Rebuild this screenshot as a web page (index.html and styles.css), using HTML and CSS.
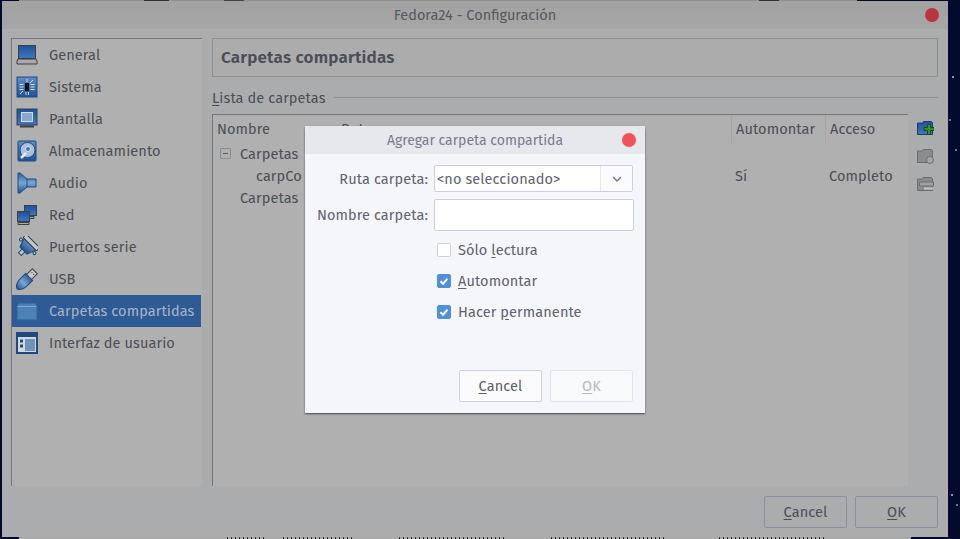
FILE: index.html
```html
<!DOCTYPE html>
<html lang="es">
  <head>
    <meta charset="UTF-8" />
    <title>Fedora24 - Configuración</title>
    <link rel="stylesheet" href="styles.css">
  </head>
  <body>
    <svg class="defs" width="0" height="0">
      <linearGradient id="blue" x1="0" y1="0" x2="0" y2="1">
        <stop offset="0" stop-color="#5e8fc6"/>
        <stop offset="1" stop-color="#1f5096"/>
      </linearGradient>
      <linearGradient id="horn" x1="0" y1="0" x2="0" y2="1">
        <stop offset="0" stop-color="#2a62a6"/>
        <stop offset=".5" stop-color="#7aa6d2"/>
        <stop offset="1" stop-color="#1f5096"/>
      </linearGradient>
      <linearGradient id="screen" x1="0" y1="0" x2="0" y2="1">
        <stop offset="0" stop-color="#1e519c"/>
        <stop offset="1" stop-color="#3f78c0"/>
      </linearGradient>
    </svg>
    <div class="behind behind-top"></div>
    <div class="behind behind-bottom"></div>

    <div class="window">
      <div class="titlebar">
        <span class="title">Fedora24 - Configuración</span>
        <span class="close"></span>
      </div>
      <div class="content">
        <div class="main">
          <ul class="sidebar">
            <li>
              <svg viewBox="0 0 22 22"><rect x="2.5" y="1.5" width="17" height="13" fill="url(#screen)" stroke="#3c3f44"/><path d="M2 15h18l1 2v3H1v-3z" fill="#a8a9aa" stroke="#3c3f44"/></svg>
              General
            </li>
            <li>
              <svg viewBox="0 0 22 22"><rect x="1" y="1" width="20" height="20" fill="url(#blue)" stroke="#1e4a80"/><rect x="9" y="7" width="4" height="8" fill="#111"/><path d="M3.5 8.5h4M3.5 11h4M3.5 13.5h4M14.5 8.5h4M14.5 11h4M14.5 13.5h4M11 3v3M10 16v3M12.5 16v3M17 4l-3 3M4 18l3-3" stroke="#d3dfea"/></svg>
              Sistema
            </li>
            <li>
              <svg viewBox="0 0 22 22"><rect x="1" y="1" width="20" height="16" fill="url(#screen)" stroke="#3c3f44"/><rect x="5.5" y="4.5" width="11" height="9" fill="#86a9d0" stroke="#d5dde6"/><path d="M4 18.5h14" stroke="#3c3f44" stroke-width="2"/></svg>
              Pantalla
            </li>
            <li>
              <svg viewBox="0 0 22 22"><rect x="2" y="1" width="18" height="20" rx="1" fill="url(#blue)" stroke="#1e4a80"/><circle cx="11.5" cy="10" r="7.5" fill="#a9c2da" stroke="#1e4a80"/><circle cx="12" cy="9" r="2.5" fill="#3a72b4" stroke="#e0e6ec"/><path d="M5 18l5-5" stroke="#e6ebf0" stroke-width="2.5"/></svg>
              Almacenamiento
            </li>
            <li>
              <svg viewBox="0 0 22 22"><path d="M2 1h2l7 6h9v8h-9l-7 6H2z" fill="url(#horn)" stroke="#1e4a80"/><path d="M11 7v8" stroke="#1e4a80"/></svg>
              Audio
            </li>
            <li>
              <svg viewBox="0 0 22 22"><rect x="8.5" y="1.5" width="12" height="10" fill="url(#screen)" stroke="#3c3f44"/><path d="M11 12.500h7v2h-4" fill="#a8a9aa" stroke="#3c3f44"/><rect x="1.500" y="7.500" width="12" height="10" fill="url(#screen)" stroke="#3c3f44"/><path d="M2 18.500h11v2H2z" fill="#a8a9aa" stroke="#3c3f44"/></svg>
              Red
            </li>
            <li>
              <svg viewBox="0 0 22 22"><g transform="rotate(45 11 11)"><path d="M3 7h16l-3 9H6z" fill="url(#blue)" stroke="#24466f"/><rect x="1.500" y="2.500" width="19" height="4.500" rx="1" fill="#c4c8cc" stroke="#3c3f44"/><rect x="9" y="16" width="4" height="5" fill="#c4c8cc" stroke="#24466f"/><circle cx="1.500" cy="10" r="1.500" fill="#a9c2da" stroke="#24466f"/><circle cx="20.500" cy="10" r="1.500" fill="#a9c2da" stroke="#24466f"/></g></svg>
              Puertos serie
            </li>
            <li>
              <svg viewBox="0 0 22 22"><g transform="rotate(45 11 11)"><path d="M6 8h10v6c0 6-2 10-5 11-3-1-5-5-5-11z" fill="url(#horn)" stroke="#1e4a80"/><rect x="7.500" y="0" width="7" height="8" fill="#c8cacc" stroke="#3c3f44"/><path d="M9.500 3h1M12 3h1" stroke="#222"/></g></svg>
              USB
            </li>
            <li class="selected">
              <svg viewBox="0 0 22 22"><path d="M1 5l2-2h17v2h1v15H1z" fill="#4d82b4" stroke="#2e5f94"/><path d="M1.500 6.500h19" stroke="#84a8cb"/></svg>
              Carpetas compartidas
            </li>
            <li>
              <svg viewBox="0 0 22 22"><rect x="1" y="1" width="20" height="20" fill="#d4d8dc" stroke="#1e4a80" stroke-width="2"/><rect x="2" y="2" width="18" height="3" fill="#1e4a80"/><rect x="9" y="7" width="10" height="12" fill="#6f93bd"/><path d="M4 9h3M4 14h3" stroke="#1e4a80" stroke-width="3"/></svg>
              Interfaz de usuario
            </li>
          </ul>

          <div class="pane">
            <div class="pane-header">Carpetas compartidas</div>
            <div class="group-title">
              <span class="group-label"><u>L</u>ista de carpetas</span>
              <span class="rule"></span>
            </div>
            <div class="folders">
              <div class="table">
                <div class="table-head">
                  <span class="col-name">Nombre</span>
                  <span class="col-path">Ruta</span>
                  <span class="col-auto">Automontar</span>
                  <span class="col-access">Acceso</span>
                </div>
                <div class="row">
                  <span class="col-name"><i class="expander"></i>Carpetas</span>
                </div>
                <div class="row">
                  <span class="col-name child">carpCo</span>
                  <span class="col-path"></span>
                  <span class="col-auto">Sí</span>
                  <span class="col-access">Completo</span>
                </div>
                <div class="row">
                  <span class="col-name sibling">Carpetas</span>
                </div>
              </div>
              <div class="toolbar">
                <svg viewBox="0 0 17 16"><path d="M.5 14.500V3h5l1-1.500h8l1 1.500v11.500z" fill="url(#screen)" stroke="#1e3f6b"/><path d="M7 7.500h3.500V4.500h3v3H17v3h-3.500v4h-3v-4H7z" fill="#3f8a2c" stroke="#1d4a12"/></svg>
                <svg viewBox="0 0 17 16"><path d="M.5 14.500V3h5l1-1.500h8l1 1.500v11.500z" fill="#8b8c8d" stroke="#6c6d6e"/><circle cx="13" cy="12" r="3.500" fill="#a6a7a8" stroke="#6c6d6e"/></svg>
                <svg viewBox="0 0 17 16"><path d="M.5 14.500V3h5l1-1.500h8l1 1.500v11.500z" fill="#8b8c8d" stroke="#6c6d6e"/><path d="M2.500 6h14v4h-14z" fill="#a0a1a2" stroke="#6c6d6e"/><path d="M7 12.500h9" stroke="#c4c4c4" stroke-width="2"/></svg>
              </div>
            </div>
          </div>
        </div>
        <div class="footer">
          <button class="btn btn-dim"><u>C</u>ancel</button>
          <button class="btn btn-dim"><u>O</u>K</button>
        </div>
      </div>
    </div>

    <div class="dialog">
      <div class="dialog-title">
        <span class="title">Agregar carpeta compartida</span>
        <span class="dialog-close"></span>
      </div>
      <div class="dialog-body">
        <div class="field">
          <label>Ruta carpeta:</label>
          <div class="combo">
            <span class="combo-value">&lt;no seleccionado&gt;</span>
            <span class="combo-arrow">
              <svg viewBox="0 0 10 6" width="10" height="6"><path d="M1 1l4 4 4-4" fill="none" stroke="#6f7488" stroke-width="1.400"/></svg>
            </span>
          </div>
        </div>
        <div class="field field-name">
          <label>Nombre carpeta:</label>
          <div class="textbox"></div>
        </div>
        <div class="checks">
          <div class="check"><span class="box"></span><span>Sólo <u>l</u>ectura</span></div>
          <div class="check"><span class="box on"><svg viewBox="0 0 14 14"><path d="M3.500 7.200l2.500 2.500 4.500-5" fill="none" stroke="#fff" stroke-width="2"/></svg></span><span><u>A</u>utomontar</span></div>
          <div class="check"><span class="box on"><svg viewBox="0 0 14 14"><path d="M3.500 7.200l2.500 2.500 4.500-5" fill="none" stroke="#fff" stroke-width="2"/></svg></span><span>Hacer <u>p</u>ermanente</span></div>
        </div>
        <div class="dialog-buttons">
          <button class="btn"><u>C</u>ancel</button>
          <button class="btn btn-disabled"><u>O</u>K</button>
        </div>
      </div>
    </div>
  </body>
</html>
```

FILE: styles.css
```css
html, body {
  margin: 0;
  height: 100%;
  overflow: hidden;
}
body {
  position: relative;
  background-color: #030a2c;
  background-image:
    radial-gradient(circle at 953px 77px, #8a93b0 1px, transparent 1px),
    radial-gradient(circle at 950px 120px, #6d769a 1px, transparent 1px),
    radial-gradient(circle at 956px 150px, #6d769a 1px, transparent 1px),
    radial-gradient(circle at 952px 495px, #8a93b0 1px, transparent 1px),
    radial-gradient(circle at 957px 505px, #6d769a 1px, transparent 1px);
  font-family: "Fira Sans", "Noto Sans", sans-serif;
  font-size: 14.5px;
  letter-spacing: 0.1px;
  color: #4b4e57;
}
u {
  text-underline-offset: 2px;
}
.defs {
  position: absolute;
}

/* whatever is on the desktop behind the window */
.behind {
  position: absolute;
}
.behind-top {
  top: 0;
  left: 19px;
  width: 838px;
  height: 1px;
  background: linear-gradient(90deg, #8e8e8e 0 125px, #333 125px 150px, #8e8e8e 150px 205px, #444 205px 225px, #8e8e8e 225px 740px, #333 740px 760px, #8e8e8e 760px);
}
/* the text of that window is cut to its top two pixels */
.behind-bottom {
  bottom: 0;
  left: 19px;
  width: 892px;
  height: 2px;
  background:
    linear-gradient(90deg, #a8a8a8 0 207px, transparent 207px 245px, #a8a8a8 245px 263px, transparent 263px 335px, #a8a8a8 335px 380px, transparent 380px 485px, #a8a8a8 485px 530px, transparent 530px 645px, #a8a8a8 645px 700px, transparent 700px 805px, #a8a8a8 805px),
    repeating-linear-gradient(90deg, #2c2c2c 0 1px, #a8a8a8 1px 4px);
}

.window {
  position: absolute;
  left: 2px;
  top: 1px;
  width: 946px;
  height: 536px;
  display: flex;
  flex-direction: column;
  background: #abacad;
  border-radius: 3px 3px 0 0;
}
.titlebar {
  height: 28px;
  flex: none;
  display: flex;
  align-items: center;
  justify-content: center;
  position: relative;
  background: linear-gradient(#a2a2a3, #a6a6a7);
  color: #55585f;
  letter-spacing: 0;
}
.close {
  position: absolute;
  right: 9px;
  top: 7px;
  width: 14px;
  height: 14px;
  border-radius: 50%;
  background: #b8363e;
}
.content {
  flex: 1;
  display: flex;
  flex-direction: column;
  padding: 9px 10px 9px 9px;
  min-height: 0;
}
.main {
  flex: 1;
  display: flex;
  gap: 10px;
  min-height: 0;
}

.sidebar {
  width: 190px;
  margin: 0;
  padding: 0;
  list-style: none;
  background: #b0b0b0;
  border-left: 1px solid #74767b;
  border-top: 1px solid #74767b;
}
.sidebar li {
  height: 32px;
  display: flex;
  align-items: center;
  gap: 11px;
  padding-left: 4px;
  width: 189px;
  box-sizing: border-box;
}
.sidebar svg {
  width: 22px;
  height: 22px;
  flex: none;
}
.sidebar .selected {
  background: #2e5b96;
  color: #a9b4c2;
}

.pane {
  flex: 1;
  display: flex;
  flex-direction: column;
  min-width: 0;
}
.pane-header {
  height: 37px;
  flex: none;
  display: flex;
  align-items: center;
  padding-left: 8px;
  border: 1px solid #8f9092;
  background: #acacad;
  font-size: 17px;
  letter-spacing: 0.2px;
  font-weight: 600;
}
.group-title {
  height: 37px;
  flex: none;
  display: flex;
  align-items: center;
  gap: 8px;
  padding-top: 3px;
  box-sizing: border-box;
}
.group-label {
  padding-top: 2px;
}
.rule {
  flex: 1;
  height: 1px;
  background: #8f9092;
}

.folders {
  flex: 1;
  display: flex;
  min-height: 0;
}
.table {
  width: 695px;
  background: #b0b0b0;
  border-left: 1px solid #74767b;
  border-top: 1px solid #74767b;
  overflow: hidden;
}
.table-head, .row {
  display: flex;
  align-items: center;
}
.table-head {
  height: 28px;
}
.row {
  height: 22px;
}
.col-name {
  width: 128px;
  flex: none;
  box-sizing: border-box;
  padding-left: 4px;
  white-space: nowrap;
}
.col-path {
  width: 390px;
  flex: none;
}
.col-auto {
  width: 94px;
  flex: none;
  height: 100%;
  display: flex;
  align-items: center;
  padding-left: 4px;
  box-sizing: border-box;
}
.col-access {
  width: 81px;
  flex: none;
  height: 100%;
  display: flex;
  align-items: center;
  padding-left: 4px;
  box-sizing: border-box;
}
.table-head .col-auto, .table-head .col-access {
  border-left: 1px solid #a3a4a5;
}
.expander {
  display: inline-block;
  width: 9px;
  height: 9px;
  margin: 0 9px 0 3px;
  border: 1px solid #8a8c92;
  border-radius: 1px;
  position: relative;
}
.expander::after {
  content: "";
  position: absolute;
  left: 2px;
  right: 2px;
  top: 4px;
  height: 1px;
  background: #55585f;
}
.child {
  padding-left: 43px;
}
.sibling {
  padding-left: 27px;
}
.toolbar {
  flex: 1;
  display: flex;
  flex-direction: column;
  align-items: center;
  gap: 12px;
  padding-top: 6px;
  padding-left: 4px;
}
.toolbar svg {
  width: 17px;
  height: 16px;
}

.footer {
  height: 42px;
  flex: none;
  display: flex;
  justify-content: flex-end;
  align-items: flex-end;
  gap: 8px;
}
.btn {
  width: 83px;
  height: 32px;
  padding: 0;
  font: inherit;
  letter-spacing: inherit;
  color: #5b5e6c;
  background: #fbfbfd;
  border: 1px solid #ccd0e2;
  border-radius: 2px;
}
.btn-dim {
  background: #abacad;
  border-color: #8e90a0;
  color: #4b4e57;
}
.btn-disabled {
  color: #b6b9c4;
  border-color: #e3e5ee;
  background: #f8f9fb;
}

.dialog {
  position: absolute;
  left: 305px;
  top: 126px;
  width: 340px;
  height: 287px;
  display: flex;
  flex-direction: column;
  background: #f5f6f9;
  border-radius: 3px 3px 0 0;
  box-shadow: 0 1px 2px #44464a;
  color: #5f6270;
}
.dialog-title {
  height: 28px;
  flex: none;
  position: relative;
  display: flex;
  align-items: center;
  justify-content: center;
  background: #e7e8ec;
  color: #777b90;
  font-size: 14px;
  letter-spacing: 0;
}
.dialog-close {
  position: absolute;
  right: 9px;
  top: 7px;
  width: 14px;
  height: 14px;
  border-radius: 50%;
  background: #f4505a;
}
.dialog-body {
  flex: 1;
  display: flex;
  flex-direction: column;
  padding: 11px 11px 11px 0;
}
.field {
  display: flex;
  align-items: center;
  gap: 6px;
}
.field label {
  width: 123px;
  text-align: right;
  flex: none;
}
.field-name {
  margin-top: 7px;
}
.combo {
  width: 199px;
  height: 27px;
  display: flex;
  align-items: center;
  box-sizing: border-box;
  background: #fff;
  border: 1px solid #ccd0e2;
  border-radius: 2px;
}
.combo-value {
  flex: 1;
  padding-left: 2px;
}
.combo-arrow {
  width: 31px;
  height: 100%;
  display: flex;
  align-items: center;
  justify-content: center;
  background: #fbfbfd;
  border-left: 1px solid #e6e8ef;
}
.textbox {
  width: 200px;
  height: 32px;
  box-sizing: border-box;
  background: #fff;
  border: 1px solid #ccd0e2;
  border-radius: 2px;
}
.checks {
  display: flex;
  flex-direction: column;
  gap: 9px;
  margin: 8px 0 0 132px;
}
.check {
  display: flex;
  align-items: center;
  gap: 7px;
  height: 22px;
}
.box {
  width: 14px;
  height: 14px;
  box-sizing: border-box;
  flex: none;
  background: #fff;
  border: 1px solid #ccd0e2;
  border-radius: 2px;
}
.box.on {
  background: #4f8fdc;
  border-color: #4f8fdc;
  position: relative;
}
.box svg {
  position: absolute;
  left: -1px;
  top: -1px;
  width: 14px;
  height: 14px;
}
.dialog-buttons {
  margin-top: auto;
  margin-right: 1px;
  display: flex;
  justify-content: flex-end;
  gap: 8px;
}
```
